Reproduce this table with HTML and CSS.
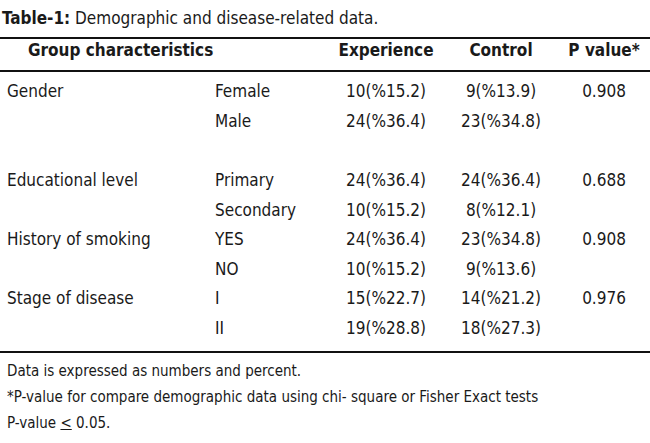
FILE: index.html
```html
<!DOCTYPE html>
<html>
<head>
<meta charset="utf-8">
<link rel="stylesheet" href="styles.css">
</head>
<body>
<div class="page">
  <p class="caption"><b>Table-1:</b> Demographic and disease-related data.</p>
  <table class="data">
    <colgroup>
      <col class="w1">
      <col class="w2">
      <col class="w3">
      <col class="w4">
      <col class="w5">
    </colgroup>
    <thead>
      <tr>
        <th class="group" colspan="2">Group characteristics</th>
        <th class="num">Experience</th>
        <th class="num">Control</th>
        <th class="num pv">P value*</th>
      </tr>
    </thead>
    <tbody>
      <tr class="first"><td class="c1">Gender</td><td>Female</td><td class="num">10(%15.2)</td><td class="num">9(%13.9)</td><td class="num pv">0.908</td></tr>
      <tr><td class="c1"></td><td>Male</td><td class="num">24(%36.4)</td><td class="num">23(%34.8)</td><td class="num pv"></td></tr>
      <tr class="spacer"><td colspan="5"></td></tr>
      <tr><td class="c1">Educational level</td><td>Primary</td><td class="num">24(%36.4)</td><td class="num">24(%36.4)</td><td class="num pv">0.688</td></tr>
      <tr><td class="c1"></td><td>Secondary</td><td class="num">10(%15.2)</td><td class="num">8(%12.1)</td><td class="num pv"></td></tr>
      <tr><td class="c1">History of smoking</td><td>YES</td><td class="num">24(%36.4)</td><td class="num">23(%34.8)</td><td class="num pv">0.908</td></tr>
      <tr><td class="c1"></td><td>NO</td><td class="num">10(%15.2)</td><td class="num">9(%13.6)</td><td class="num pv"></td></tr>
      <tr><td class="c1">Stage of disease</td><td>I</td><td class="num">15(%22.7)</td><td class="num">14(%21.2)</td><td class="num pv">0.976</td></tr>
      <tr class="last"><td class="c1"></td><td>II</td><td class="num">19(%28.8)</td><td class="num">18(%27.3)</td><td class="num pv"></td></tr>
    </tbody>
  </table>
  <div class="notes">
    <p>Data is expressed as numbers and percent.</p>
    <p>*P-value for compare demographic data using chi- square or Fisher Exact tests</p>
    <p>P-value <span class="le">&lt;</span> 0.05.</p>
  </div>
</div>
</body>
</html>
```

FILE: styles.css
```css
html, body {
  margin: 0;
  padding: 0;
  background: #ffffff;
}
body {
  font-family: "DejaVu Sans Condensed", "DejaVu Sans", sans-serif;
  font-stretch: condensed;
  color: #1a1a1a;
  width: 650px;
  height: 443px;
  overflow: hidden;
}
.page {
  padding-top: 6px;
}
.caption {
  margin: 0 0 7px 2px;
  font-size: 17px;
  line-height: 24px;
  white-space: nowrap;
}
.caption b {
  font-weight: bold;
}
.data {
  width: 650px;
  border-collapse: collapse;
  border-top: 2px solid #111;
  border-bottom: 2px solid #111;
  font-size: 17px;
  table-layout: fixed;
}
.w1 { width: 215px; }
.w2 { width: 121px; }
.w3 { width: 100px; }
.w4 { width: 130px; }
.w5 { width: 84px; }
.data thead tr {
  border-bottom: 2px solid #111;
}
.data th {
  padding: 1px 0 10px;
  line-height: 20px;
  font-weight: bold;
  text-align: center;
  white-space: nowrap;
}
.data th.group {
  text-align: left;
  padding-left: 28px;
}
.data td {
  padding: 0;
  line-height: 29.5px;
  white-space: nowrap;
}
.data tr.first td {
  padding-top: 5px;
}
.data tr.spacer td {
  height: 30px;
  line-height: 30px;
}
.data tr.last td {
  padding-bottom: 8px;
}
.data td.c1 {
  padding-left: 7px;
}
.num {
  text-align: center;
}
.data .pv {
  padding-right: 8px;
}
.notes {
  padding-left: 7px;
  padding-top: 5px;
  font-size: 15px;
}
.notes p {
  margin: 0;
  line-height: 26px;
  white-space: nowrap;
}
.le {
  text-decoration: underline;
}
```
